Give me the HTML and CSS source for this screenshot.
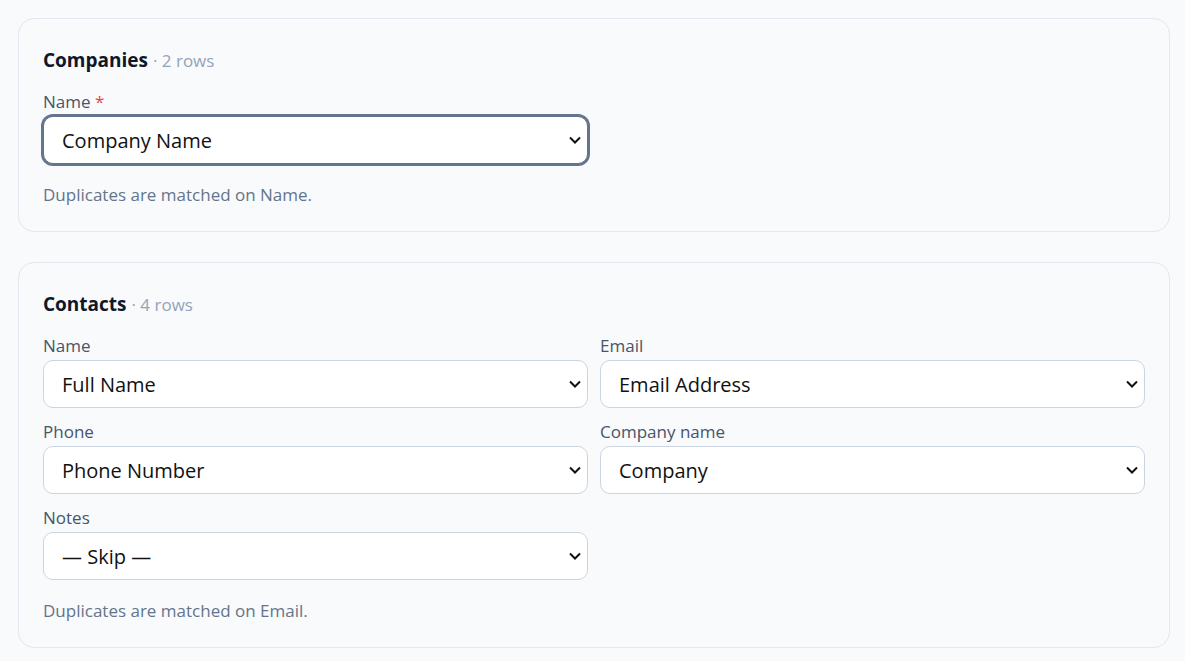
FILE: index.html
```html
<!DOCTYPE html>
<html lang="en">
<head>
    <meta charset="UTF-8">
    <meta name="viewport" content="width=device-width, initial-scale=1.0">
    <title>Import mapping</title>
    <link rel="stylesheet" href="styles.css">
</head>
<body>
    <div class="page">

        <!-- Companies -->
        <section class="card">
            <h2 class="card-title">Companies <span class="count">&middot; 2 rows</span></h2>
            <div class="fields">
                <div class="field">
                    <label class="field-label">Name <span class="req">*</span></label>
                    <div class="select-wrap">
                        <select class="select is-focused">
                            <option>Company Name</option>
                        </select>
                        <svg class="chevron" viewBox="0 0 12 8" width="12" height="8"><path d="M1 1.5l5 5 5-5" fill="none" stroke="#111" stroke-width="2"/></svg>
                    </div>
                </div>
            </div>
            <p class="hint">Duplicates are matched on Name.</p>
        </section>

        <!-- Contacts -->
        <section class="card">
            <h2 class="card-title">Contacts <span class="count">&middot; 4 rows</span></h2>
            <div class="fields">
                <div class="field">
                    <label class="field-label">Name</label>
                    <div class="select-wrap">
                        <select class="select"><option>Full Name</option></select>
                        <svg class="chevron" viewBox="0 0 12 8" width="12" height="8"><path d="M1 1.5l5 5 5-5" fill="none" stroke="#111" stroke-width="2"/></svg>
                    </div>
                </div>
                <div class="field">
                    <label class="field-label">Email</label>
                    <div class="select-wrap">
                        <select class="select"><option>Email Address</option></select>
                        <svg class="chevron" viewBox="0 0 12 8" width="12" height="8"><path d="M1 1.5l5 5 5-5" fill="none" stroke="#111" stroke-width="2"/></svg>
                    </div>
                </div>
                <div class="field">
                    <label class="field-label">Phone</label>
                    <div class="select-wrap">
                        <select class="select"><option>Phone Number</option></select>
                        <svg class="chevron" viewBox="0 0 12 8" width="12" height="8"><path d="M1 1.5l5 5 5-5" fill="none" stroke="#111" stroke-width="2"/></svg>
                    </div>
                </div>
                <div class="field">
                    <label class="field-label">Company name</label>
                    <div class="select-wrap">
                        <select class="select"><option>Company</option></select>
                        <svg class="chevron" viewBox="0 0 12 8" width="12" height="8"><path d="M1 1.5l5 5 5-5" fill="none" stroke="#111" stroke-width="2"/></svg>
                    </div>
                </div>
                <div class="field">
                    <label class="field-label">Notes</label>
                    <div class="select-wrap">
                        <select class="select"><option>&mdash; Skip &mdash;</option></select>
                        <svg class="chevron" viewBox="0 0 12 8" width="12" height="8"><path d="M1 1.5l5 5 5-5" fill="none" stroke="#111" stroke-width="2"/></svg>
                    </div>
                </div>
            </div>
            <p class="hint">Duplicates are matched on Email.</p>
        </section>

    </div>
</body>
</html>
```

FILE: styles.css
```css
body {
    margin: 0;
    background: #f8fafc;
    font-family: "Open Sans", "Noto Sans", sans-serif;
    color: #0f172a;
}

/* Contenedor de las tarjetas */
.page {
    padding: 18px 15px 18px 18px;
    display: flex;
    flex-direction: column;
    gap: 30px;
}

.card {
    background: #f8fafc;
    border: 1px solid #e2e8f0;
    border-radius: 16px;
    padding: 25px 24px 24px 24px;
}

.card-title {
    margin: 0 0 13px 0;
    font-size: 19px;
    line-height: 32px;
    font-weight: 700;
    color: #0f172a;
}

.count {
    font-size: 17px;
    font-weight: 400;
    color: #94a3b8;
}

/* Rejilla de campos, dos columnas */
.fields {
    display: grid;
    grid-template-columns: 1fr 1fr;
    column-gap: 12px;
    row-gap: 12px;
}

.field-label {
    display: block;
    font-size: 17px;
    line-height: 24px;
    margin-bottom: 2px;
    color: #475569;
}

.req {
    color: #ef4444;
}

.select-wrap {
    position: relative;
}

.select {
    appearance: none;
    -webkit-appearance: none;
    display: block;
    width: 100%;
    height: 48px;
    margin: 0;
    padding: 0 40px 0 18px;
    border: 1px solid #cbd5e1;
    border-radius: 10px;
    background: #fff;
    font-family: inherit;
    font-size: 20px;
    color: #111;
}

.select.is-focused {
    border-color: #64748b;
    box-shadow: 0 0 0 2px #64748b;
    outline: none;
}

.chevron {
    position: absolute;
    right: 7px;
    top: 20px;
    pointer-events: none;
}

.hint {
    margin: 19px 0 0 0;
    font-size: 17px;
    line-height: 24px;
    color: #64748b;
}
```
